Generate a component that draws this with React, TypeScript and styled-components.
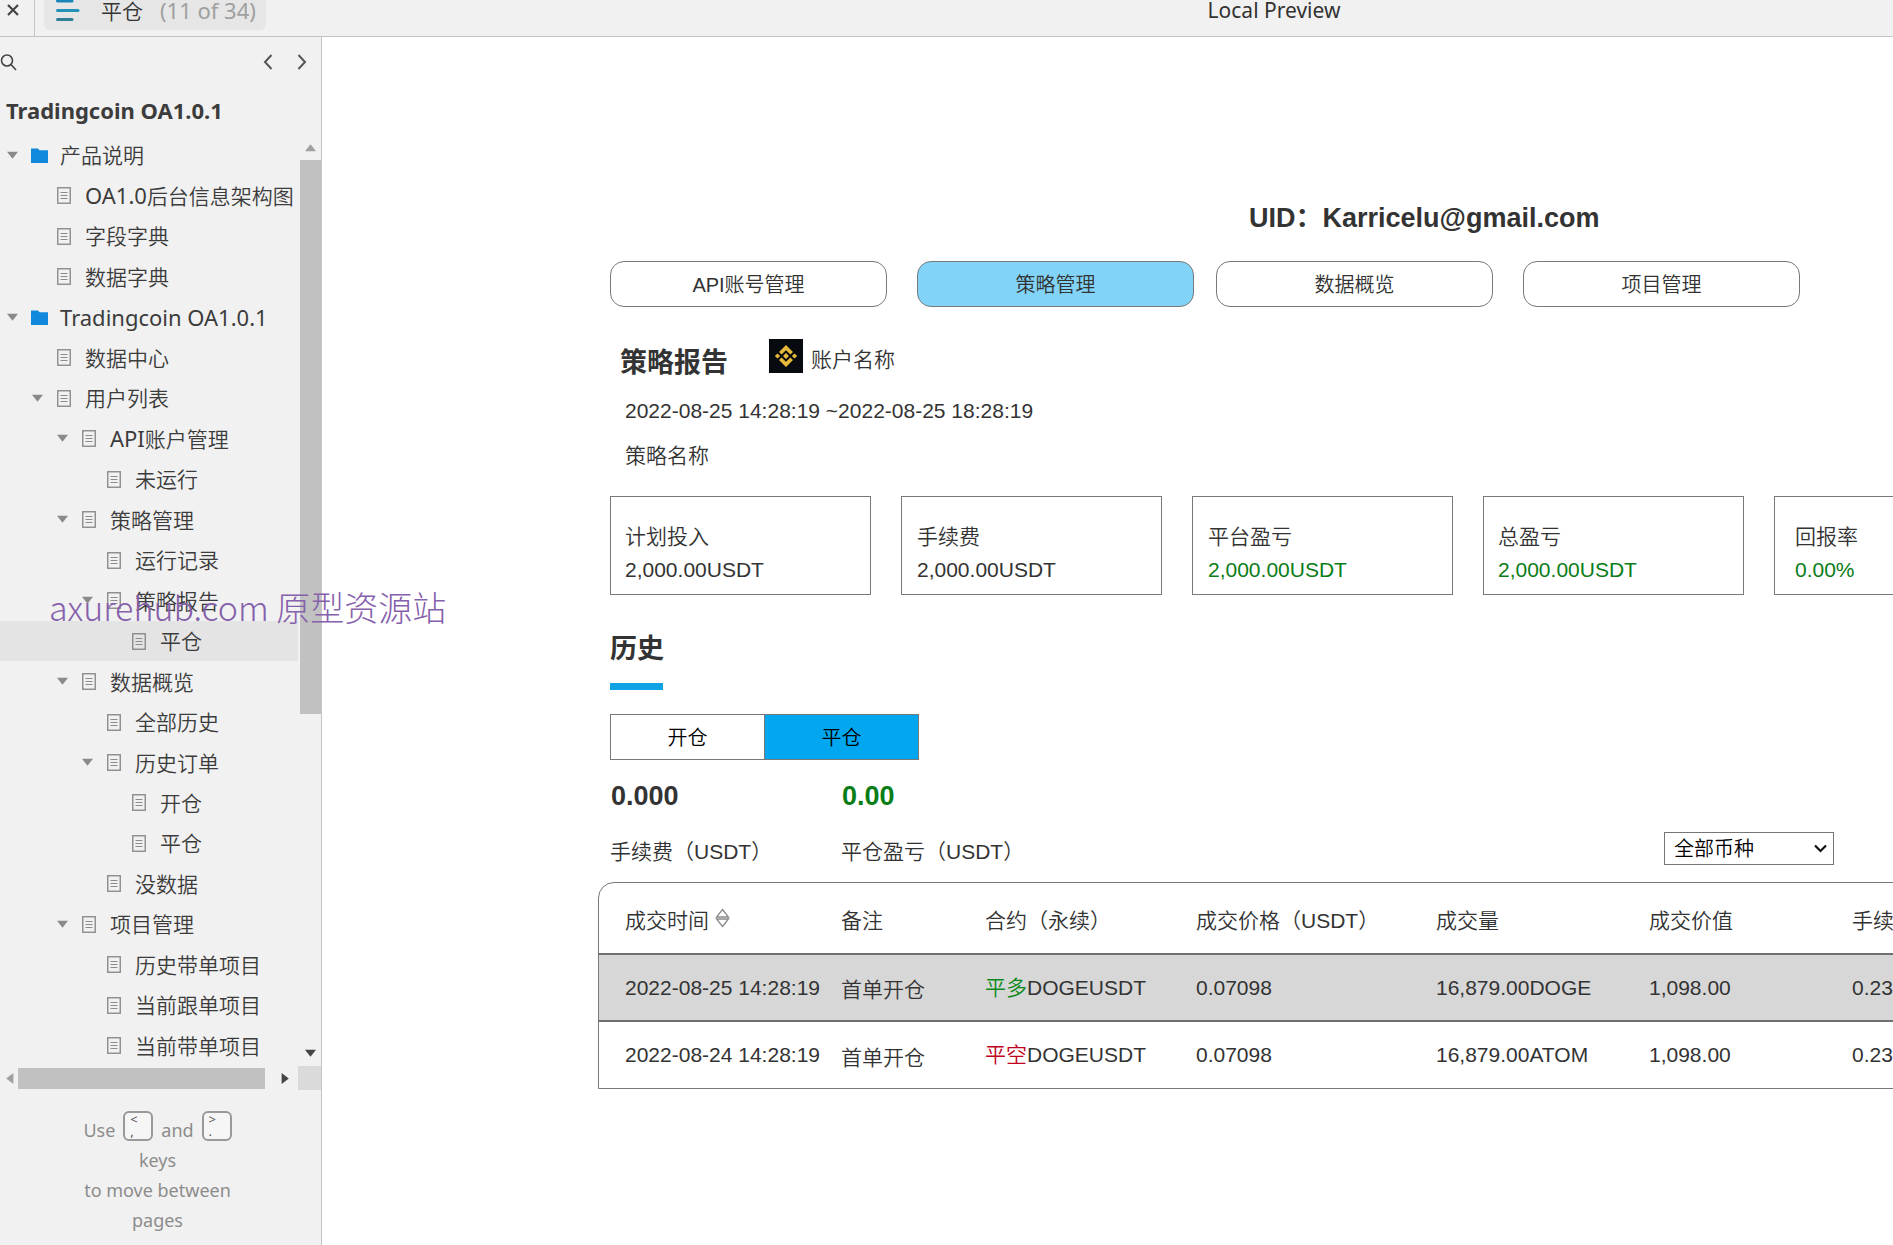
import React, { useState } from "react";
import styled, { createGlobalStyle } from "styled-components";

const GlobalStyle = createGlobalStyle`
  *, *::before, *::after { box-sizing: border-box; }
  body { margin: 0; background: #fff; overflow: hidden; }
  button, select { font: inherit; color: inherit; }
  h1, h2, p, ul, dl, dd { margin: 0; padding: 0; }
`;

const uiFont = `"Noto Sans", "Noto Sans CJK SC", sans-serif`;
const pageFont = `"Liberation Sans", "Noto Sans CJK SC", sans-serif`;

const Shell = styled.div`
  position: relative;
  display: grid;
  grid-template: 37px 1fr / 322px minmax(0, 1fr);
  height: 100vh;
  overflow: hidden;
  font-family: ${uiFont};
  font-weight: 350;
`;

const TopBar = styled.header`
  grid-column: 1 / -1;
  display: grid;
  grid-template-columns: 35px 620px 1fr;
  background: #f1f1f1;
  border-bottom: 1px solid #c4c4c4;
`;

const CloseButton = styled.button`
  display: flex;
  align-items: flex-start;
  justify-content: center;
  padding: 4px 8px 0 0;
  background: none;
  border: 0;
  border-right: 1px solid #c4c4c4;
`;

const PageChip = styled.button`
  display: flex;
  align-items: center;
  justify-self: start;
  height: 30px;
  margin-left: 9px;
  padding: 0 10px 10px 12px;
  background: #e6e6e6;
  border: 0;
  border-radius: 0 0 6px 6px;
  font-size: 21px;
  color: #333;
  white-space: nowrap;
`;

const ChipName = styled.span`
  margin: 0 17px 0 21px;
`;

const ChipCount = styled.span`
  color: #a0a0a0;
  font-size: 22px;
  font-weight: 400;
`;

const PreviewTitle = styled.p`
  font-size: 21px;
  font-weight: 400;
  line-height: 20px;
  text-align: center;
  color: #333;
`;

const Sidebar = styled.nav`
  display: flex;
  flex-direction: column;
  min-height: 0;
  background: #f1f1f1;
  border-right: 1px solid #c4c4c4;
`;

const Tools = styled.div`
  display: flex;
  align-items: center;
  height: 50px;
  padding-right: 14px;
`;

const ToolButton = styled.button<{ $push?: boolean }>`
  display: flex;
  padding: 0;
  margin-left: ${(p) => (p.$push ? "auto" : "0")};
  margin-right: ${(p) => (p.$push ? "24px" : "0")};
  background: none;
  border: 0;
`;

const ProjectTitle = styled.h1`
  height: 48px;
  padding-left: 6px;
  font-size: 22px;
  font-weight: 700;
  line-height: 46px;
  color: #3c3c3c;
`;

const TreeFrame = styled.div`
  display: grid;
  grid-template: minmax(0, 1fr) 24px / minmax(0, 1fr) 23px;
  flex: 1;
  min-height: 0;
`;

const Tree = styled.ul`
  display: flex;
  flex-direction: column;
  min-height: 0;
  list-style: none;
`;

const TreeRow = styled.li<{ $depth: number; $current: boolean }>`
  display: flex;
  flex: 1;
  align-items: center;
  min-height: 0;
  padding-left: ${(p) => 7 + p.$depth * 25}px;
  background: ${(p) => (p.$current ? "#e4e4e4" : "transparent")};
`;

const Toggle = styled.button<{ $shown: boolean }>`
  display: flex;
  width: 11px;
  padding: 0;
  margin-right: 12px;
  background: none;
  border: 0;
  visibility: ${(p) => (p.$shown ? "visible" : "hidden")};
`;

const TreeLink = styled.a`
  display: flex;
  align-items: center;
  gap: 12px;
  font-size: 21px;
  line-height: 30px;
  color: #3c3c3c;
  text-decoration: none;
  white-space: nowrap;
`;

const Latin = styled.span`
  font-size: 22px;
  font-weight: 400;
`;

const IconSlot = styled.span`
  display: flex;
  justify-content: center;
  width: 18px;
`;

const ScrollRail = styled.div<{ $row?: boolean }>`
  display: flex;
  flex-direction: ${(p) => (p.$row ? "row" : "column")};
  align-items: center;
  padding: ${(p) => (p.$row ? "0" : "0 0 0 2px")};
`;

const ScrollEnd = styled.span<{ $size: number }>`
  display: flex;
  flex: 0 0 ${(p) => p.$size}px;
  align-items: center;
  justify-content: center;
`;

const Track = styled.div<{ $row?: boolean }>`
  flex: 1;
  width: ${(p) => (p.$row ? "auto" : "100%")};
  height: ${(p) => (p.$row ? "21px" : "auto")};
`;

const Thumb = styled.div<{ $row?: boolean }>`
  width: ${(p) => (p.$row ? "97%" : "100%")};
  height: ${(p) => (p.$row ? "100%" : "63%")};
  background: #c1c1c1;
`;

const ScrollCorner = styled.div`
  background: #dadada;
`;

const KeysHint = styled.footer`
  height: 155px;
  padding: 21px 6px 0 0;
  font-size: 18px;
  font-weight: 400;
  line-height: 30px;
  color: #8c8c8c;
  text-align: center;
`;

const HintLine = styled.p`
  display: flex;
  justify-content: center;
  gap: 8px;
`;

const HintWord = styled.span`
  padding-top: 4px;
`;

const KeyCap = styled.kbd`
  display: flex;
  flex-direction: column;
  width: 30px;
  height: 30px;
  padding-left: 5px;
  border: 2px solid #999;
  border-radius: 6px;
  background: #f6f6f6;
  font-family: ${uiFont};
  font-size: 13px;
  line-height: 12px;
  text-align: left;
  color: #555;
`;

const Main = styled.main`
  display: flex;
  flex-direction: column;
  min-width: 0;
  padding: 165px 0 0 276px;
  overflow: hidden;
  font-family: ${pageFont};
  font-size: 21px;
  line-height: 30px;
  color: #333;
  white-space: nowrap;
`;

const Section = styled.section<{ $top: number }>`
  margin-top: ${(p) => p.$top}px;
  padding-left: 12px;
`;

const UserId = styled.p`
  padding-left: 651px;
  font-size: 27px;
  font-weight: 700;
  line-height: 32px;
`;

const TabRow = styled.nav`
  display: flex;
  gap: 22px;
`;

const TabPair = styled.div`
  display: flex;
  gap: 30px;
`;

const Tab = styled.button<{ $active: boolean }>`
  width: 277px;
  height: 46px;
  padding: 2px 0 0;
  border: 1px solid #797979;
  border-radius: 14px;
  background: ${(p) => (p.$active ? "#81d3f8" : "#fff")};
  font-size: 20px;
`;

const ReportHead = styled.div`
  display: flex;
  align-items: flex-start;
  gap: 41px;
  padding-left: 10px;
`;

const Heading = styled.h2<{ $line: number }>`
  font-size: 27px;
  font-weight: 700;
  line-height: ${(p) => p.$line}px;
`;

const Account = styled.div`
  display: flex;
  gap: 8px;
  line-height: 41px;
`;

const ReportLines = styled.div`
  display: grid;
  gap: 15px;
  padding: 9px 0 0 15px;
`;

const Cards = styled.dl`
  display: flex;
  gap: 30px;
`;

const Card = styled.div<{ $inset: number }>`
  flex: 0 0 261px;
  height: 99px;
  padding: 24px 0 0 ${(p) => p.$inset}px;
  border: 1px solid #797979;
`;

const CardLabel = styled.dt`
  line-height: 32px;
`;

const CardValue = styled.dd<{ $up: boolean }>`
  line-height: 34px;
  color: ${(p) => (p.$up ? "#0a7d17" : "#333")};
`;

const HeadingBar = styled.div`
  width: 53px;
  height: 7px;
  margin-top: 15px;
  background: #0fa3e6;
`;

const Segments = styled.div`
  display: flex;
  width: 309px;
  height: 46px;
  margin-top: 24px;
  border: 1px solid #797979;
`;

const Segment = styled.button<{ $active: boolean }>`
  flex: 1;
  padding: 2px 0 0;
  border: 0;
  background: ${(p) => (p.$active ? "#02a7f0" : "#fff")};
  font-size: 20px;
  color: #000;
  & + & { border-left: 1px solid #797979; }
`;

const Summary = styled.div`
  display: flex;
  align-items: flex-end;
  padding-right: 59px;
`;

const Stat = styled.div`
  display: grid;
  gap: 23px;
  width: 231px;
`;

const StatValue = styled.strong<{ $up?: boolean }>`
  padding-left: 1px;
  font-size: 27px;
  font-weight: 700;
  line-height: 36px;
  color: ${(p) => (p.$up ? "#0a7d17" : "#333")};
`;

const CoinPicker = styled.label`
  position: relative;
  display: flex;
  align-items: center;
  margin: 0 0 2px auto;
`;

const CoinSelect = styled.select`
  width: 170px;
  height: 33px;
  padding: 0 9px;
  border: 1px solid #767676;
  border-radius: 0;
  background: #fff;
  appearance: none;
  font-size: 20px;
  color: #000;
`;

const SelectArrow = styled.svg`
  position: absolute;
  right: 7px;
  pointer-events: none;
`;

const TableFrame = styled.div`
  width: 1440px;
  margin-top: 15px;
  border: 1px solid #797979;
  border-radius: 16px 16px 0 0;
  overflow: hidden;
`;

const Table = styled.table`
  width: 100%;
  table-layout: fixed;
  border-collapse: separate;
  border-spacing: 0;
`;

const HeadCell = styled.th<{ $width: number }>`
  width: ${(p) => p.$width}px;
  height: 72px;
  padding: 5px 0 0;
  border-bottom: 2px solid #6f6f6f;
  font-weight: inherit;
  text-align: left;
  &:first-child { padding-left: 26px; }
`;

const Row = styled.tr<{ $shaded: boolean }>`
  background: ${(p) => (p.$shaded ? "#d7d7d7" : "#fff")};
  & > td {
    height: ${(p) => (p.$shaded ? 67 : 66)}px;
    border-bottom: ${(p) => (p.$shaded ? "2px solid #6f6f6f" : "0")};
  }
`;

const Cell = styled.td<{ $low?: boolean }>`
  padding: ${(p) => (p.$low ? "5px 0 0" : "0")};
  &:first-child { padding-left: 26px; }
`;

const Side = styled.span<{ $long: boolean }>`
  color: ${(p) => (p.$long ? "#0a8a17" : "#c00020")};
`;

const SortButton = styled.button`
  padding: 0;
  margin-left: 6px;
  background: none;
  border: 0;
`;

const Watermark = styled.p`
  position: absolute;
  left: 49px;
  top: 583px;
  font-family: "Noto Sans CJK SC", sans-serif;
  font-size: 34px;
  font-weight: 300;
  line-height: 48px;
  color: #8560ab;
  pointer-events: none;
`;

type Node = {
  label: string;
  latin?: string;
  depth: number;
  open?: boolean;
  folder?: boolean;
  current?: boolean;
};

const nodes: Node[] = [
  { label: "产品说明", depth: 0, open: true, folder: true },
  { latin: "OA1.0", label: "后台信息架构图", depth: 1 },
  { label: "字段字典", depth: 1 },
  { label: "数据字典", depth: 1 },
  { latin: "Tradingcoin OA1.0.1", label: "", depth: 0, open: true, folder: true },
  { label: "数据中心", depth: 1 },
  { label: "用户列表", depth: 1, open: true },
  { latin: "API", label: "账户管理", depth: 2, open: true },
  { label: "未运行", depth: 3 },
  { label: "策略管理", depth: 2, open: true },
  { label: "运行记录", depth: 3 },
  { label: "策略报告", depth: 3, open: true },
  { label: "平仓", depth: 4, current: true },
  { label: "数据概览", depth: 2, open: true },
  { label: "全部历史", depth: 3 },
  { label: "历史订单", depth: 3, open: true },
  { label: "开仓", depth: 4 },
  { label: "平仓", depth: 4 },
  { label: "没数据", depth: 3 },
  { label: "项目管理", depth: 2, open: true },
  { label: "历史带单项目", depth: 3 },
  { label: "当前跟单项目", depth: 3 },
  { label: "当前带单项目", depth: 3 },
];

const cards = [
  { label: "计划投入", value: "2,000.00USDT", up: false, inset: 14 },
  { label: "手续费", value: "2,000.00USDT", up: false, inset: 15 },
  { label: "平台盈亏", value: "2,000.00USDT", up: true, inset: 15 },
  { label: "总盈亏", value: "2,000.00USDT", up: true, inset: 14 },
  { label: "回报率", value: "0.00%", up: true, inset: 20 },
];

const columns = [
  { label: "成交时间", width: 242 },
  { label: "备注", width: 144 },
  { label: "合约（永续）", width: 211 },
  { label: "成交价格（USDT）", width: 240 },
  { label: "成交量", width: 213 },
  { label: "成交价值", width: 203 },
  { label: "手续费", width: 185 },
];

const trades = [
  { time: "2022-08-25 14:28:19", long: true, volume: "16,879.00DOGE" },
  { time: "2022-08-24 14:28:19", long: false, volume: "16,879.00ATOM" },
];

const tabPairs = [
  ["API账号管理", "策略管理"],
  ["数据概览", "项目管理"],
];

type Direction = "up" | "down" | "left" | "right";
const turns: Record<Direction, number> = { down: 0, left: 90, up: 180, right: 270 };

const Triangle = ({ dir = "down", color = "#8a8a8a" }: { dir?: Direction; color?: string }) => (
  <svg width="11" height="11" viewBox="0 0 10 10" aria-hidden="true">
    <path d="M0 1.500h10L5 8z" fill={color} transform={`rotate(${turns[dir]} 5 5)`} />
  </svg>
);

const FolderIcon = () => (
  <svg width="17" height="15" viewBox="0 0 17 15" aria-hidden="true">
    <path d="M0 .5h7l1.500 1.700H17V15H0z" fill="#1089dc" />
  </svg>
);

const PageIcon = () => (
  <svg width="14" height="17" viewBox="0 0 14 17" fill="none" stroke="#8c8c8c" aria-hidden="true">
    <rect x=".75" y=".75" width="12.500" height="15.500" strokeWidth="1.400" />
    <path d="M3.500 5.500h7M3.500 8.500h7M3.500 11.500h7" strokeWidth="1.200" />
  </svg>
);

const Chevron = ({ flip }: { flip?: boolean }) => (
  <svg width="10" height="16" viewBox="0 0 10 16" fill="none" stroke="#555" strokeWidth="2" aria-hidden="true">
    <path d={flip ? "M1.500 1l6.500 7-6.500 7" : "M8.500 1L2 8l6.500 7"} />
  </svg>
);

const BinanceLogo = () => (
  <svg width="34" height="34" viewBox="0 0 34 34" aria-hidden="true">
    <rect width="34" height="34" fill="#070b10" />
    <g fill="#e6b93a">
      <path d="M17 6l7 7-2.600 2.600L17 11.200l-4.400 4.400L10 13z" />
      <path d="M17 28l7-7-2.600-2.600-4.400 4.400-4.400-4.400L10 21z" />
      <path d="M17 14l3 3-3 3-3-3zM8.500 14.400l2.600 2.600-2.600 2.600L5.900 17zM25.500 14.400l2.600 2.600-2.600 2.600-2.600-2.600z" />
    </g>
  </svg>
);

export default function App() {
  const [tab, setTab] = useState("策略管理");
  const [side, setSide] = useState("平仓");

  return (
    <Shell>
      <GlobalStyle />
      <TopBar>
        <CloseButton aria-label="Close">
          <svg width="12" height="12" viewBox="0 0 12 12" stroke="#444" strokeWidth="2.200">
            <path d="M1 1l10 10M11 1L1 11" />
          </svg>
        </CloseButton>
        <PageChip>
          <svg width="24" height="21" viewBox="0 0 24 21" strokeWidth="3" strokeLinecap="round" aria-hidden="true">
            <path d="M1.500 1H16" stroke="#1a86b8" />
            <path d="M1.500 10.500H22" stroke="#2391b8" />
            <path d="M1.500 19.500H16" stroke="#2f7f96" />
          </svg>
          <ChipName>平仓</ChipName>
          <ChipCount>(11 of 34)</ChipCount>
        </PageChip>
        <PreviewTitle>Local Preview</PreviewTitle>
      </TopBar>

      <Sidebar>
        <Tools>
          <ToolButton aria-label="Search">
            <svg width="17" height="17" viewBox="0 0 17 17" fill="none" stroke="#444" strokeWidth="1.600">
              <circle cx="7" cy="6.500" r="5.500" />
              <path d="M11 10.500l5 5.500" />
            </svg>
          </ToolButton>
          <ToolButton $push aria-label="Previous page"><Chevron /></ToolButton>
          <ToolButton aria-label="Next page"><Chevron flip /></ToolButton>
        </Tools>
        <ProjectTitle>Tradingcoin OA1.0.1</ProjectTitle>
        <TreeFrame>
          <Tree>
            {nodes.map((n, i) => (
              <TreeRow key={i} $depth={n.depth} $current={!!n.current}>
                <Toggle $shown={!!n.open} aria-label="Collapse"><Triangle /></Toggle>
                <TreeLink href="#">
                  <IconSlot>{n.folder ? <FolderIcon /> : <PageIcon />}</IconSlot>
                  <span>{n.latin && <Latin>{n.latin}</Latin>}{n.label}</span>
                </TreeLink>
              </TreeRow>
            ))}
          </Tree>
          <ScrollRail>
            <ScrollEnd $size={25}><Triangle dir="up" color="#a0a0a0" /></ScrollEnd>
            <Track><Thumb /></Track>
            <ScrollEnd $size={26}><Triangle color="#444" /></ScrollEnd>
          </ScrollRail>
          <ScrollRail $row>
            <ScrollEnd $size={18}><Triangle dir="left" color="#a0a0a0" /></ScrollEnd>
            <Track $row><Thumb $row /></Track>
            <ScrollEnd $size={25}><Triangle dir="right" color="#444" /></ScrollEnd>
          </ScrollRail>
          <ScrollCorner />
        </TreeFrame>
        <KeysHint>
          <HintLine>
            <HintWord>Use</HintWord>
            <KeyCap><span>&lt;</span><span>,</span></KeyCap>
            <HintWord>and</HintWord>
            <KeyCap><span>&gt;</span><span>.</span></KeyCap>
          </HintLine>
          <p>keys</p>
          <p>to move between</p>
          <p>pages</p>
        </KeysHint>
      </Sidebar>

      <Main>
        <UserId>UID：Karricelu@gmail.com</UserId>
        <Section $top={27}>
          <TabRow>
            {tabPairs.map((pair) => (
              <TabPair key={pair[0]}>
                {pair.map((name) => (
                  <Tab key={name} $active={tab === name} onClick={() => setTab(name)}>{name}</Tab>
                ))}
              </TabPair>
            ))}
          </TabRow>
        </Section>

        <Section $top={32}>
          <ReportHead>
            <Heading $line={48}>策略报告</Heading>
            <Account><BinanceLogo />账户名称</Account>
          </ReportHead>
          <ReportLines>
            <p>2022-08-25 14:28:19 ~2022-08-25 18:28:19</p>
            <p>策略名称</p>
          </ReportLines>
        </Section>

        <Section $top={25}>
          <Cards>
            {cards.map((c) => (
              <Card key={c.label} $inset={c.inset}>
                <CardLabel>{c.label}</CardLabel>
                <CardValue $up={c.up}>{c.value}</CardValue>
              </Card>
            ))}
          </Cards>
        </Section>

        <Section $top={35}>
          <Heading $line={38}>历史</Heading>
          <HeadingBar />
          <Segments>
            {["开仓", "平仓"].map((name) => (
              <Segment key={name} $active={side === name} onClick={() => setSide(name)}>{name}</Segment>
            ))}
          </Segments>
        </Section>

        <Section $top={18}>
          <Summary>
            <Stat><StatValue>0.000</StatValue><span>手续费（USDT）</span></Stat>
            <Stat><StatValue $up>0.00</StatValue><span>平仓盈亏（USDT）</span></Stat>
            <CoinPicker>
              <CoinSelect aria-label="币种"><option>全部币种</option></CoinSelect>
              <SelectArrow width="13" height="9" viewBox="0 0 13 9" fill="none" stroke="#111" strokeWidth="2.200">
                <path d="M1 1.500l5.500 5.500L12 1.500" />
              </SelectArrow>
            </CoinPicker>
          </Summary>
        </Section>

        <TableFrame>
          <Table>
            <thead>
              <tr>
                {columns.map((c, i) => (
                  <HeadCell key={c.label} $width={c.width}>
                    {c.label}
                    {i === 0 && (
                      <SortButton aria-label="Sort">
                        <svg width="15" height="20" viewBox="0 0 15 20" fill="none" stroke="#8a8a8a" strokeWidth="1.300">
                          <path d="M7.500 1.500L13.500 9h-12zM7.500 18.500L13.500 11h-12z" />
                        </svg>
                      </SortButton>
                    )}
                  </HeadCell>
                ))}
              </tr>
            </thead>
            <tbody>
              {trades.map((t) => (
                <Row key={t.time} $shaded={t.long}>
                  <Cell>{t.time}</Cell>
                  <Cell $low>首单开仓</Cell>
                  <Cell><Side $long={t.long}>{t.long ? "平多" : "平空"}</Side>DOGEUSDT</Cell>
                  <Cell>0.07098</Cell>
                  <Cell>{t.volume}</Cell>
                  <Cell>1,098.00</Cell>
                  <Cell>0.23</Cell>
                </Row>
              ))}
            </tbody>
          </Table>
        </TableFrame>
      </Main>

      <Watermark>axurehub.com 原型资源站</Watermark>
    </Shell>
  );
}
